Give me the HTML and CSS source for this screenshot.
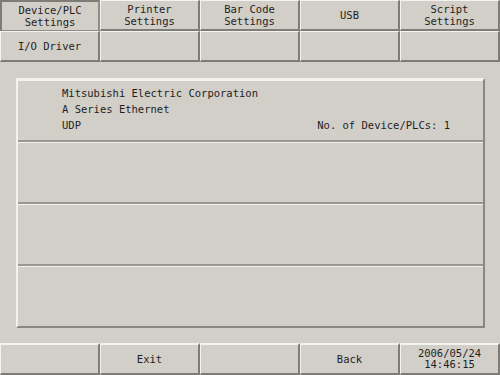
FILE: index.html
```html
<!DOCTYPE html>
<html lang="en">
<head>
  <meta charset="UTF-8"/>
  <title>Device/PLC Settings</title>
  <link rel="stylesheet" href="styles.css">
</head>
<body>
  <div class="screen">
    <div class="tabs">
      <div class="btn pressed">Device/PLC<br>Settings</div>
      <div class="btn">Printer<br>Settings</div>
      <div class="btn">Bar Code<br>Settings</div>
      <div class="btn">USB</div>
      <div class="btn">Script<br>Settings</div>
    </div>
    <div class="tabs">
      <div class="btn">I/O Driver</div>
      <div class="btn"></div>
      <div class="btn"></div>
      <div class="btn"></div>
      <div class="btn"></div>
    </div>

    <div class="main">
      <div class="panel">
        <div class="row">
          <div class="info">
            <div>Mitsubishi Electric Corporation</div>
            <div>A Series Ethernet</div>
            <div class="last-line">
              <span>UDP</span>
              <span>No. of Device/PLCs: 1</span>
            </div>
          </div>
        </div>
        <div class="row"></div>
        <div class="row"></div>
        <div class="row"></div>
      </div>
    </div>

    <div class="tabs bottom">
      <div class="btn"></div>
      <div class="btn">Exit</div>
      <div class="btn"></div>
      <div class="btn">Back</div>
      <div class="btn clock">2006/05/24<br>14:46:15</div>
    </div>
  </div>
</body>
</html>
```

FILE: styles.css
```css
body {
  margin: 0;
  background-color: #d2cec8;
  font-family: "DejaVu Sans Mono", "Liberation Mono", monospace;
  font-size: 10.5px;
  color: #1e1e1e;
}

.screen {
  width: 500px;
  height: 375px;
  display: flex;
  flex-direction: column;
}

.tabs {
  display: grid;
  grid-template-columns: repeat(5, 1fr);
  height: 31px;
}

.btn {
  display: flex;
  align-items: center;
  justify-content: center;
  text-align: center;
  line-height: 12px;
  border-top: 1px solid #f4f2ee;
  border-left: 1px solid #f4f2ee;
  border-right: 2px solid #7f7b75;
  border-bottom: 2px solid #7f7b75;
  box-sizing: border-box;
}

.btn.pressed {
  border-top: 2px solid #7f7b75;
  border-left: 2px solid #7f7b75;
  border-right: 2px solid #8f8b85;
  border-bottom: 1px solid #8f8b85;
}

.main {
  flex: 1;
  padding: 16px 15px 15px 16px;
  display: flex;
}

.panel {
  flex: 1;
  display: flex;
  flex-direction: column;
  border-top: 2px solid #f4f2ee;
  border-left: 2px solid #f4f2ee;
  border-right: 2px solid #8a8680;
  border-bottom: 2px solid #8a8680;
}

.row {
  flex: 1;
  border-bottom: 2px solid #9a968f;
  box-shadow: inset 0 1px 0 #f4f2ee;
}

.row:last-child {
  border-bottom: none;
}

.info {
  padding: 5px 33px 0 44px;
  line-height: 16px;
}

.last-line {
  display: flex;
  justify-content: space-between;
}

.bottom {
  height: 32px;
}

.bottom .btn {
  border-top: 2px solid #f4f2ee;
}

.clock {
  line-height: 11px;
}
```
